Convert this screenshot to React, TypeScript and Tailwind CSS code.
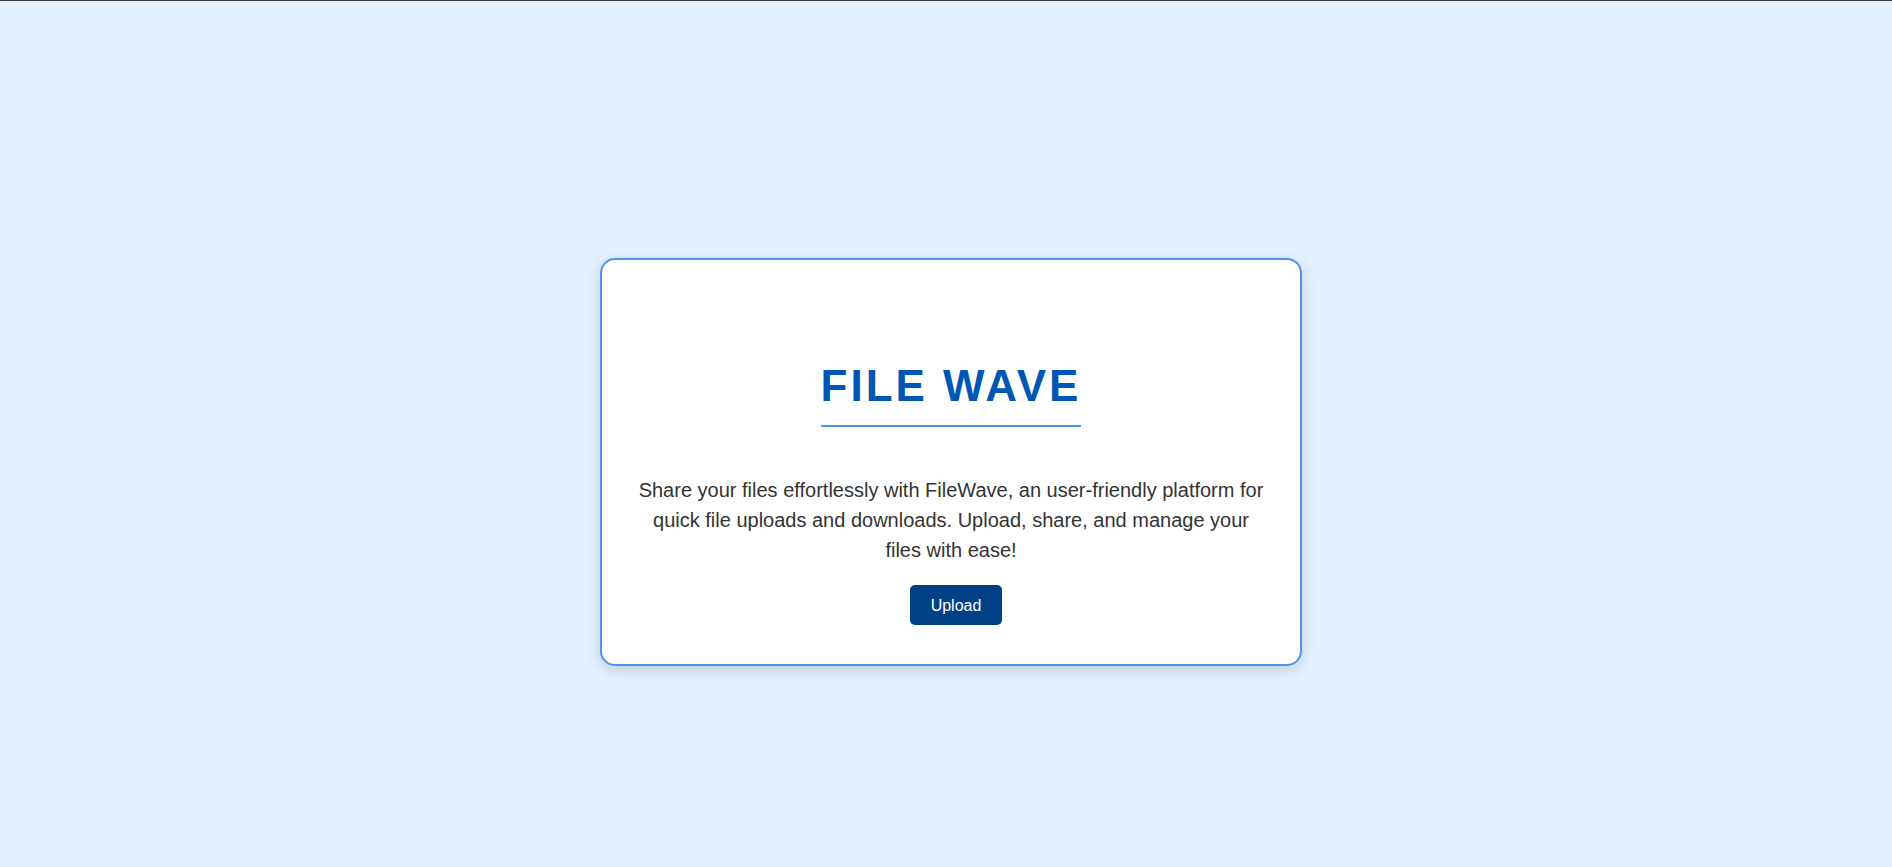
export default function App() {
  return (
    <div className="min-h-[867px] bg-[#e3f0fd] font-['Liberation_Sans',Arial,sans-serif]">
      {/* dark strip along the top edge */}
      <div className="h-px bg-[#3c3c3c]" />

      <div className="flex justify-center pt-[257px] pl-[10px]">
        <div className="w-[702px] rounded-[15px] border-2 border-[#4d94f2] bg-white px-[34px] pt-[101px] pb-[39px] text-center shadow-[0_4px_15px_rgba(0,0,0,0.15)]">
          <h1 className="inline-block border-b-2 border-[#4d94f2] pb-[15px] text-[44px] leading-[49px] font-bold tracking-[3px] text-[#0056b3]">
            FILE WAVE
          </h1>

          <p className="mt-[48px] text-[20px] leading-[30px] text-[#333333]">
            Share your files effortlessly with FileWave, an user-friendly platform for quick file
            uploads and downloads. Upload, share, and manage your files with ease!
          </p>

          <button
            type="button"
            className="mt-[20px] ml-[10px] h-[40px] rounded-[5px] bg-[#004085] px-[21px] text-[16px] leading-[19px] text-white"
          >
            Upload
          </button>
        </div>
      </div>
    </div>
  );
}
